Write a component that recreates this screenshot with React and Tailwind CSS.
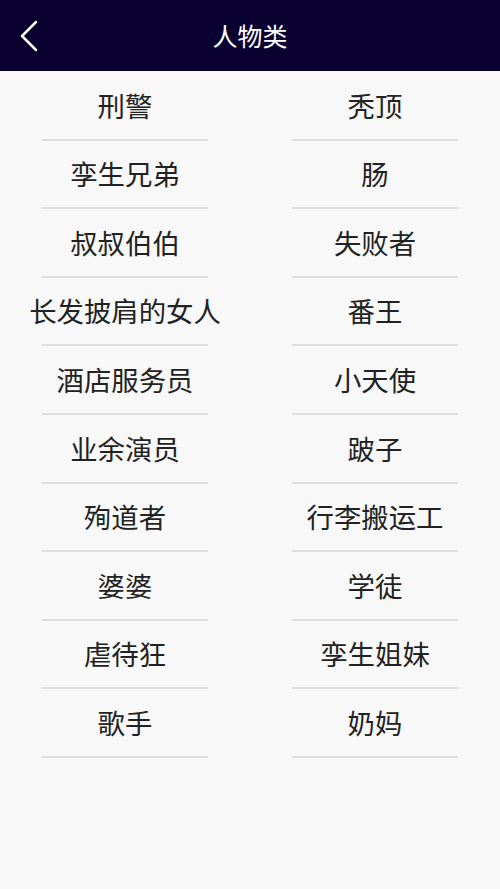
import React from "react";

const rows = [
  ["刑警", "秃顶"],
  ["孪生兄弟", "肠"],
  ["叔叔伯伯", "失败者"],
  ["长发披肩的女人", "番王"],
  ["酒店服务员", "小天使"],
  ["业余演员", "跛子"],
  ["殉道者", "行李搬运工"],
  ["婆婆", "学徒"],
  ["虐待狂", "孪生姐妹"],
  ["歌手", "奶妈"],
];

const font = { fontFamily: '"Noto Sans CJK SC", "Noto Sans", sans-serif' };

function Cell({ label }) {
  return (
    <div className="flex h-[68.6px] flex-col items-center">
      <div className="flex flex-1 items-center justify-center whitespace-nowrap text-[27.4px] leading-none text-[#222]">
        {label}
      </div>
      <div className="h-[2px] w-[166px] bg-[#dedede]" />
    </div>
  );
}

export default function App() {
  return (
    <div className="min-h-[889px] w-[500px] bg-[#f8f8f8]" style={font}>
      <div className="relative flex h-[71px] items-center justify-center bg-[#0a0131]">
        <button className="absolute left-[18px] top-[20px] p-0">
          <svg width="22" height="32" viewBox="0 0 22 32" fill="none">
            <polyline
              points="18,2 4,16 18,30"
              stroke="white"
              strokeWidth="2.5"
              strokeLinecap="round"
              strokeLinejoin="round"
            />
          </svg>
        </button>
        <h1 className="text-[25px] font-normal text-white">人物类</h1>
      </div>
      <div className="grid grid-cols-2 pt-[1px]">
        {rows.map(([a, b]) => (
          <React.Fragment key={a}>
            <Cell label={a} />
            <Cell label={b} />
          </React.Fragment>
        ))}
      </div>
    </div>
  );
}
